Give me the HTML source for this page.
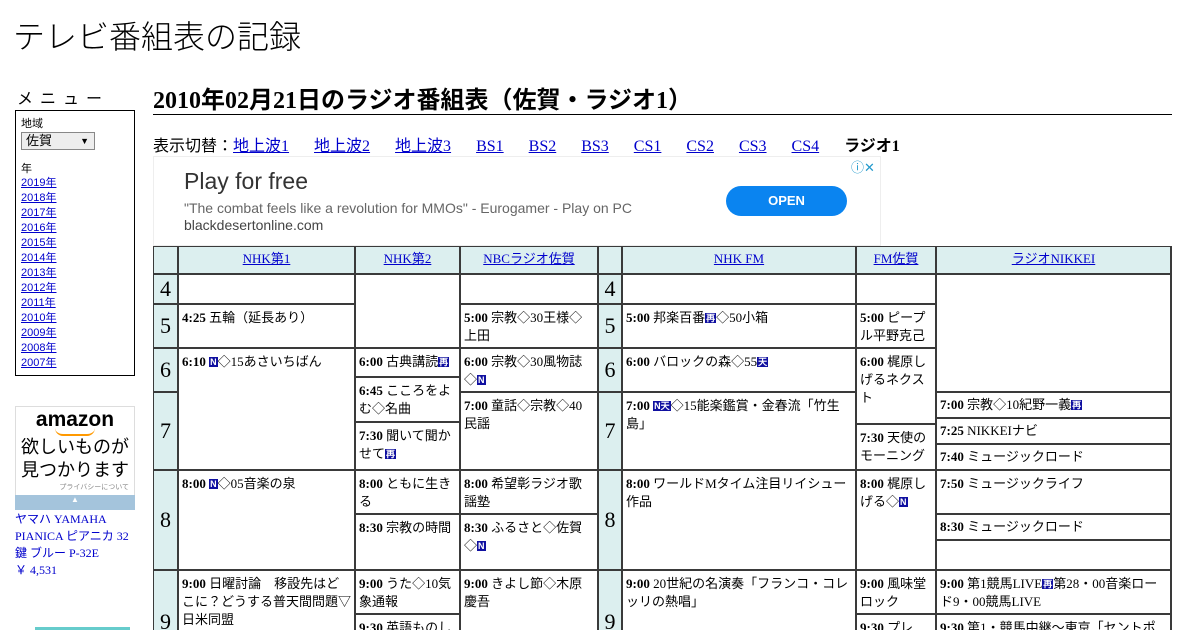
<!DOCTYPE html>
<html><head><meta charset="utf-8"><style>
html,body{margin:0;width:1200px;height:630px;overflow:hidden}
body{background:#fff;font-family:"Liberation Serif","Noto Sans CJK JP",serif;color:#000;position:relative}
.a{position:absolute}
a{color:#00c;text-decoration:underline}
#t{position:absolute;left:153px;top:246px;width:1019px;height:384px;background:#3a3a3a;overflow:hidden}
#t div{position:absolute;background:#fff;font-size:13px;line-height:18px;padding:4px 3px;box-sizing:border-box;overflow:hidden}
#t div.h{background:#dcefef;font-size:22px;padding:0;text-align:center;line-height:26px;display:flex;align-items:center;justify-content:center}
#t div.c{background:#dcefef;text-align:center;padding:3px 0}
b{font-weight:bold}
.n{display:inline-block;background:#1010a0;color:#fff;font-size:9px;line-height:10px;padding:0 1px;font-weight:bold;font-family:"Liberation Sans",sans-serif;vertical-align:1px}
.sb a{display:block;font-size:11px;line-height:15px}
.nav a{margin-right:25px}
</style></head><body>
<div class="a" style="left:13px;top:12px;font-size:32px;font-family:'Liberation Sans','Noto Sans CJK JP',sans-serif;font-weight:300">テレビ番組表の記録</div>
<div class="a" style="left:17px;top:85px;font-size:16px;letter-spacing:7px;font-family:'Liberation Sans','Noto Sans CJK JP',sans-serif">メニュー</div>
<div class="a sb" style="left:15px;top:110px;width:120px;height:266px;border:1px solid #000;padding:4px 5px;box-sizing:border-box;font-size:11px;font-family:'Liberation Sans','Noto Sans CJK JP',sans-serif">
<div>地域</div>
<div style="width:68px;height:16px;border:1px solid #888;background:#eee;font-size:13px;line-height:16px;padding-left:4px;margin:1px 0 10px;position:relative">佐賀<span style="position:absolute;right:5px;font-size:9px">▼</span></div>
<div style="margin-bottom:0">年</div>
<a>2019年</a><a>2018年</a><a>2017年</a><a>2016年</a><a>2015年</a><a>2014年</a><a>2013年</a><a>2012年</a><a>2011年</a><a>2010年</a><a>2009年</a><a>2008年</a><a>2007年</a>
</div>
<div class="a" style="left:15px;top:406px;width:120px;height:104px;border:1px solid #ddd;box-sizing:border-box;text-align:center;font-family:'Liberation Sans','Noto Sans CJK JP',sans-serif">
<div style="font-size:21px;font-weight:bold;margin-top:2px;line-height:21px">amazon</div>
<div style="width:40px;height:6px;border-bottom:2px solid #f90;border-radius:0 0 20px 20px;margin:-2px auto 0"></div>
<div style="font-size:18px;line-height:23px;margin-top:0">欲しいものが<br>見つかります</div>
<div style="font-size:7px;color:#888;text-align:right;padding-right:5px">プライバシーについて</div>
</div>
<div class="a" style="left:15px;top:495px;width:120px;height:15px;background:#a4c4dc;color:#fff;font-size:8px;text-align:center">▲</div>
<div class="a" style="left:15px;top:511px;width:125px;font-size:12px;line-height:17px;color:#00c">ヤマハ YAMAHA PIANICA ピアニカ 32鍵 ブルー P-32E<br>￥ 4,531</div>
<div class="a" style="left:35px;top:627px;width:95px;height:3px;background:#6cc"></div>
<div class="a" style="left:153px;top:80px;font-size:24px;font-weight:bold;white-space:nowrap">2010年02月21日のラジオ番組表（佐賀・ラジオ1）</div>
<div class="a" style="left:153px;top:114px;width:1019px;height:1px;background:#000"></div>
<div class="a nav" style="left:153px;top:132px;font-size:16px;white-space:nowrap">表示切替：<a>地上波1</a><a>地上波2</a><a>地上波3</a><a>BS1</a><a>BS2</a><a>BS3</a><a>CS1</a><a>CS2</a><a>CS3</a><a>CS4</a><b>ラジオ1</b></div>
<div class="a" style="left:153px;top:156px;width:728px;height:90px;border:1px solid #eee;box-sizing:border-box;font-family:'Liberation Sans',sans-serif">
<div class="a" style="left:30px;top:11px;font-size:23px;color:#333">Play for free</div>
<div class="a" style="left:30px;top:43px;font-size:14px;color:#666;white-space:nowrap">"The combat feels like a revolution for MMOs" - Eurogamer - Play on PC</div>
<div class="a" style="left:30px;top:60px;font-size:14px;color:#444">blackdesertonline.com</div>
<div class="a" style="left:572px;top:29px;width:121px;height:30px;border-radius:15px;background:#0a84f0;color:#fff;font-size:13px;font-weight:bold;text-align:center;line-height:30px">OPEN</div>
<div class="a" style="left:697px;top:0px;font-size:13px;color:#29c">ⓘ✕</div>
</div>
<div id="t">
<div class="c" style="left:1px;top:1px;width:23px;height:26px"></div>
<div class="c" style="left:26px;top:1px;width:175px;height:26px"><a>NHK第1</a></div>
<div class="c" style="left:203px;top:1px;width:103px;height:26px"><a>NHK第2</a></div>
<div class="c" style="left:308px;top:1px;width:136px;height:26px"><a>NBCラジオ佐賀</a></div>
<div class="c" style="left:446px;top:1px;width:22px;height:26px"></div>
<div class="c" style="left:470px;top:1px;width:232px;height:26px"><a>NHK FM</a></div>
<div class="c" style="left:704px;top:1px;width:78px;height:26px"><a>FM佐賀</a></div>
<div class="c" style="left:784px;top:1px;width:233px;height:26px"><a>ラジオNIKKEI</a></div>

<div class="h" style="left:1px;top:29px;width:23px;height:28px">4</div>
<div class="h" style="left:1px;top:59px;width:23px;height:42px">5</div>
<div class="h" style="left:1px;top:103px;width:23px;height:42px">6</div>
<div class="h" style="left:1px;top:147px;width:23px;height:76px">7</div>
<div class="h" style="left:1px;top:225px;width:23px;height:98px">8</div>
<div class="h" style="left:1px;top:325px;width:23px;height:120px;align-items:flex-start;padding-top:38px">9</div>
<div class="h" style="left:446px;top:29px;width:22px;height:28px">4</div>
<div class="h" style="left:446px;top:59px;width:22px;height:42px">5</div>
<div class="h" style="left:446px;top:103px;width:22px;height:42px">6</div>
<div class="h" style="left:446px;top:147px;width:22px;height:76px">7</div>
<div class="h" style="left:446px;top:225px;width:22px;height:98px">8</div>
<div class="h" style="left:446px;top:325px;width:22px;height:120px;align-items:flex-start;padding-top:38px">9</div>

<div style="left:26px;top:29px;width:175px;height:28px"></div>
<div style="left:26px;top:59px;width:175px;height:42px"><b>4:25</b> 五輪（延長あり）</div>
<div style="left:26px;top:103px;width:175px;height:120px"><b>6:10</b> <span class="n">N</span>◇15あさいちばん</div>
<div style="left:26px;top:225px;width:175px;height:98px"><b>8:00</b> <span class="n">N</span>◇05音楽の泉</div>
<div style="left:26px;top:325px;width:175px;height:120px"><b>9:00</b> 日曜討論　移設先はどこに？どうする普天間問題▽日米同盟</div>

<div style="left:203px;top:29px;width:103px;height:72px"></div>
<div style="left:203px;top:103px;width:103px;height:27px"><b>6:00</b> 古典講読<span class="n">再</span></div>
<div style="left:203px;top:132px;width:103px;height:43px"><b>6:45</b> こころをよむ◇名曲</div>
<div style="left:203px;top:177px;width:103px;height:46px"><b>7:30</b> 聞いて聞かせて<span class="n">再</span></div>
<div style="left:203px;top:225px;width:103px;height:42px"><b>8:00</b> ともに生きる</div>
<div style="left:203px;top:269px;width:103px;height:54px"><b>8:30</b> 宗教の時間</div>
<div style="left:203px;top:325px;width:103px;height:42px"><b>9:00</b> うた◇10気象通報</div>
<div style="left:203px;top:369px;width:103px;height:60px"><b>9:30</b> 英語ものしり</div>

<div style="left:308px;top:29px;width:136px;height:28px"></div>
<div style="left:308px;top:59px;width:136px;height:42px"><b>5:00</b> 宗教◇30王様◇上田</div>
<div style="left:308px;top:103px;width:136px;height:42px"><b>6:00</b> 宗教◇30風物誌◇<span class="n">N</span></div>
<div style="left:308px;top:147px;width:136px;height:76px"><b>7:00</b> 童話◇宗教◇40民謡</div>
<div style="left:308px;top:225px;width:136px;height:42px"><b>8:00</b> 希望彰ラジオ歌謡塾</div>
<div style="left:308px;top:269px;width:136px;height:54px"><b>8:30</b> ふるさと◇佐賀◇<span class="n">N</span></div>
<div style="left:308px;top:325px;width:136px;height:120px"><b>9:00</b> きよし節◇木原慶吾</div>

<div style="left:470px;top:29px;width:232px;height:28px"></div>
<div style="left:470px;top:59px;width:232px;height:42px"><b>5:00</b> 邦楽百番<span class="n">再</span>◇50小箱</div>
<div style="left:470px;top:103px;width:232px;height:42px"><b>6:00</b> バロックの森◇55<span class="n">天</span></div>
<div style="left:470px;top:147px;width:232px;height:76px"><b>7:00</b> <span class="n">N天</span>◇15能楽鑑賞・金春流「竹生島」</div>
<div style="left:470px;top:225px;width:232px;height:98px"><b>8:00</b> ワールドMタイム注目リイシュー作品</div>
<div style="left:470px;top:325px;width:232px;height:120px"><b>9:00</b> 20世紀の名演奏「フランコ・コレッリの熱唱」</div>

<div style="left:704px;top:29px;width:78px;height:28px"></div>
<div style="left:704px;top:59px;width:78px;height:42px"><b>5:00</b> ピープル平野克己</div>
<div style="left:704px;top:103px;width:78px;height:74px"><b>6:00</b> 梶原しげるネクスト</div>
<div style="left:704px;top:179px;width:78px;height:44px"><b>7:30</b> 天使のモーニング</div>
<div style="left:704px;top:225px;width:78px;height:98px"><b>8:00</b> 梶原しげる◇<span class="n">N</span></div>
<div style="left:704px;top:325px;width:78px;height:42px"><b>9:00</b> 風味堂ロック</div>
<div style="left:704px;top:369px;width:78px;height:60px"><b>9:30</b> プレ</div>

<div style="left:784px;top:29px;width:233px;height:116px"></div>
<div style="left:784px;top:147px;width:233px;height:24px;padding-top:3px"><b>7:00</b> 宗教◇10紀野一義<span class="n">再</span></div>
<div style="left:784px;top:173px;width:233px;height:24px;padding-top:3px"><b>7:25</b> NIKKEIナビ</div>
<div style="left:784px;top:199px;width:233px;height:24px;padding-top:3px"><b>7:40</b> ミュージックロード</div>
<div style="left:784px;top:225px;width:233px;height:42px"><b>7:50</b> ミュージックライフ</div>
<div style="left:784px;top:269px;width:233px;height:24px;padding-top:3px"><b>8:30</b> ミュージックロード</div>
<div style="left:784px;top:295px;width:233px;height:28px"></div>
<div style="left:784px;top:325px;width:233px;height:42px"><b>9:00</b> 第1競馬LIVE<span class="n">再</span>第28・00音楽ロード9・00競馬LIVE</div>
<div style="left:784px;top:369px;width:233px;height:60px"><b>9:30</b> 第1・競馬中継～東京「セントポ</div>
</div>
</body></html>
